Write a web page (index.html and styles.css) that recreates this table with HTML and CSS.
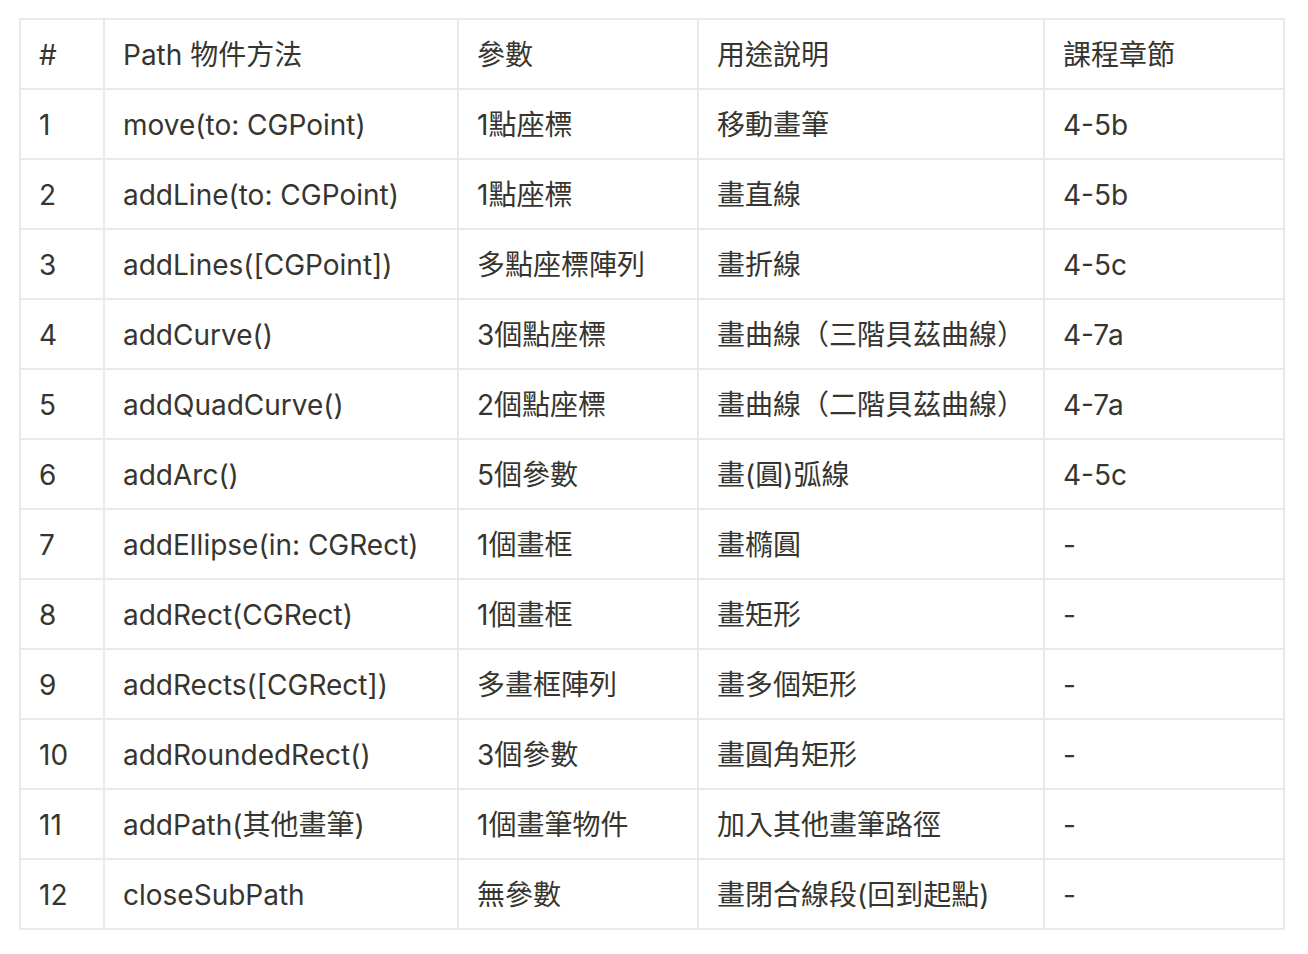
FILE: index.html
```html
<!DOCTYPE html>
<html lang="zh-Hant">
<head>
<meta charset="utf-8">
<title>Path 物件方法</title>
<link rel="stylesheet" href="styles.css">
</head>
<body>
<div class="page">
<table class="methods">
<colgroup>
<col class="c-num"><col class="c-method"><col class="c-param"><col class="c-desc"><col class="c-ch">
</colgroup>
<tr><td>#</td><td>Path 物件方法</td><td>參數</td><td>用途說明</td><td>課程章節</td></tr>
<tr><td>1</td><td>move(to: CGPoint)</td><td>1點座標</td><td>移動畫筆</td><td>4-5b</td></tr>
<tr><td>2</td><td>addLine(to: CGPoint)</td><td>1點座標</td><td>畫直線</td><td>4-5b</td></tr>
<tr><td>3</td><td>addLines([CGPoint])</td><td>多點座標陣列</td><td>畫折線</td><td>4-5c</td></tr>
<tr><td>4</td><td>addCurve()</td><td>3個點座標</td><td>畫曲線（三階貝茲曲線）</td><td>4-7a</td></tr>
<tr><td>5</td><td>addQuadCurve()</td><td>2個點座標</td><td>畫曲線（二階貝茲曲線）</td><td>4-7a</td></tr>
<tr><td>6</td><td>addArc()</td><td>5個參數</td><td>畫(圓)弧線</td><td>4-5c</td></tr>
<tr><td>7</td><td>addEllipse(in: CGRect)</td><td>1個畫框</td><td>畫橢圓</td><td>-</td></tr>
<tr><td>8</td><td>addRect(CGRect)</td><td>1個畫框</td><td>畫矩形</td><td>-</td></tr>
<tr><td>9</td><td>addRects([CGRect])</td><td>多畫框陣列</td><td>畫多個矩形</td><td>-</td></tr>
<tr><td>10</td><td>addRoundedRect()</td><td>3個參數</td><td>畫圓角矩形</td><td>-</td></tr>
<tr><td>11</td><td>addPath(其他畫筆)</td><td>1個畫筆物件</td><td>加入其他畫筆路徑</td><td>-</td></tr>
<tr><td>12</td><td>closeSubPath</td><td>無參數</td><td>畫閉合線段(回到起點)</td><td>-</td></tr>
</table>
</div>
</body>
</html>
```
FILE: styles.css
```css
html, body {
  margin: 0;
  padding: 0;
  background: #ffffff;
}
.page {
  padding: 18px 0 0 19px;
}
.methods {
  border-collapse: separate;
  border-spacing: 0;
  table-layout: fixed;
  width: 1266px;
  border-top: 2px solid #e9e9e7;
  border-left: 2px solid #e9e9e7;
  font-family: "Inter", "Noto Sans CJK TC", sans-serif;
  font-size: 28px;
  color: #37352f;
}
.c-num { width: 84px; }
.c-method { width: 354px; }
.c-param { width: 240px; }
.c-desc { width: 346px; }
.c-ch { width: 240px; }
.methods td {
  box-sizing: border-box;
  height: 70px;
  padding: 2px 18px 0;
  line-height: 42px;
  border-right: 2px solid #e9e9e7;
  border-bottom: 2px solid #e9e9e7;
  white-space: nowrap;
  overflow: hidden;
  vertical-align: middle;
}
```
